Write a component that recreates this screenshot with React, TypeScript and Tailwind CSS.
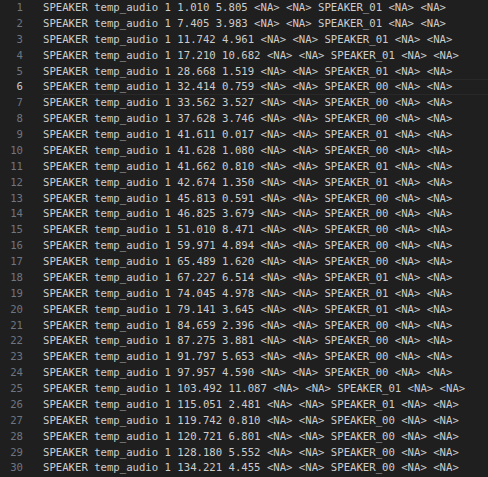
import React from "react";

const lines = [
  "SPEAKER temp_audio 1 1.010 5.805 <NA> <NA> SPEAKER_01 <NA> <NA>",
  "SPEAKER temp_audio 1 7.405 3.983 <NA> <NA> SPEAKER_01 <NA> <NA>",
  "SPEAKER temp_audio 1 11.742 4.961 <NA> <NA> SPEAKER_01 <NA> <NA>",
  "SPEAKER temp_audio 1 17.210 10.682 <NA> <NA> SPEAKER_01 <NA> <NA>",
  "SPEAKER temp_audio 1 28.668 1.519 <NA> <NA> SPEAKER_01 <NA> <NA>",
  "SPEAKER temp_audio 1 32.414 0.759 <NA> <NA> SPEAKER_00 <NA> <NA>",
  "SPEAKER temp_audio 1 33.562 3.527 <NA> <NA> SPEAKER_00 <NA> <NA>",
  "SPEAKER temp_audio 1 37.628 3.746 <NA> <NA> SPEAKER_00 <NA> <NA>",
  "SPEAKER temp_audio 1 41.611 0.017 <NA> <NA> SPEAKER_01 <NA> <NA>",
  "SPEAKER temp_audio 1 41.628 1.080 <NA> <NA> SPEAKER_00 <NA> <NA>",
  "SPEAKER temp_audio 1 41.662 0.810 <NA> <NA> SPEAKER_01 <NA> <NA>",
  "SPEAKER temp_audio 1 42.674 1.350 <NA> <NA> SPEAKER_01 <NA> <NA>",
  "SPEAKER temp_audio 1 45.813 0.591 <NA> <NA> SPEAKER_00 <NA> <NA>",
  "SPEAKER temp_audio 1 46.825 3.679 <NA> <NA> SPEAKER_00 <NA> <NA>",
  "SPEAKER temp_audio 1 51.010 8.471 <NA> <NA> SPEAKER_00 <NA> <NA>",
  "SPEAKER temp_audio 1 59.971 4.894 <NA> <NA> SPEAKER_00 <NA> <NA>",
  "SPEAKER temp_audio 1 65.489 1.620 <NA> <NA> SPEAKER_00 <NA> <NA>",
  "SPEAKER temp_audio 1 67.227 6.514 <NA> <NA> SPEAKER_01 <NA> <NA>",
  "SPEAKER temp_audio 1 74.045 4.978 <NA> <NA> SPEAKER_01 <NA> <NA>",
  "SPEAKER temp_audio 1 79.141 3.645 <NA> <NA> SPEAKER_01 <NA> <NA>",
  "SPEAKER temp_audio 1 84.659 2.396 <NA> <NA> SPEAKER_00 <NA> <NA>",
  "SPEAKER temp_audio 1 87.275 3.881 <NA> <NA> SPEAKER_00 <NA> <NA>",
  "SPEAKER temp_audio 1 91.797 5.653 <NA> <NA> SPEAKER_00 <NA> <NA>",
  "SPEAKER temp_audio 1 97.957 4.590 <NA> <NA> SPEAKER_00 <NA> <NA>",
  "SPEAKER temp_audio 1 103.492 11.087 <NA> <NA> SPEAKER_01 <NA> <NA>",
  "SPEAKER temp_audio 1 115.051 2.481 <NA> <NA> SPEAKER_01 <NA> <NA>",
  "SPEAKER temp_audio 1 119.742 0.810 <NA> <NA> SPEAKER_00 <NA> <NA>",
  "SPEAKER temp_audio 1 120.721 6.801 <NA> <NA> SPEAKER_00 <NA> <NA>",
  "SPEAKER temp_audio 1 128.180 5.552 <NA> <NA> SPEAKER_00 <NA> <NA>",
  "SPEAKER temp_audio 1 134.221 4.455 <NA> <NA> SPEAKER_00 <NA> <NA>",
];

export default function App() {
  return (
    <div className="w-[488px] h-[477px] overflow-hidden bg-[#1f1f1f] font-['DejaVu_Sans_Mono',monospace] text-[10.63px]">
      {lines.map((t, i) => {
        const current = i === 5;
        return (
          <div key={i} className="flex h-[15.875px] leading-[15.875px]">
            <div
              className={
                "w-[23px] shrink-0 text-right " +
                (current ? "text-[#cccccc]" : "text-[#6e7681]")
              }
            >
              {i + 1}
            </div>
            <div className="w-[20px] shrink-0" />
            <div
              className={
                "flex-1 whitespace-pre text-[#cccccc] " +
                (current ? "border-y border-[#282828] leading-[13.875px]" : "")
              }
            >
              {t}
            </div>
          </div>
        );
      })}
    </div>
  );
}
